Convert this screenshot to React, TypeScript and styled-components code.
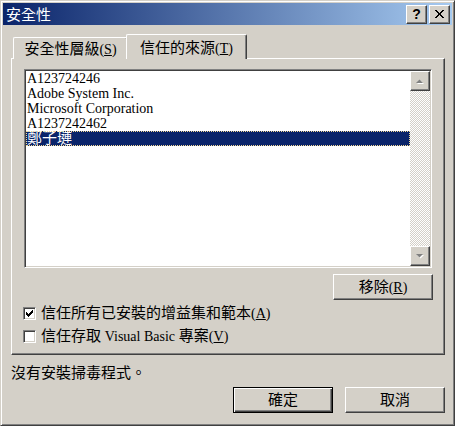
import React from "react";
import styled, { createGlobalStyle } from "styled-components";

const FACE = "#d4d0c8";
const SHADOW = "#808080";
const DARK = "#404040";
const LIGHT = "#ffffff";
const NAVY = "#0a246a";
const UI_FONT = `"Liberation Serif", "Noto Sans CJK TC", serif`;

const GlobalStyle = createGlobalStyle`
  html, body { margin: 0; padding: 0; background: ${FACE}; }
  body { width: 455px; height: 426px; overflow: hidden; }
  * { box-sizing: border-box; }
`;

const Window = styled.div`
  width: 455px;
  height: 426px;
  background: ${FACE};
  border: 1px solid;
  border-color: ${FACE} ${DARK} ${DARK} ${FACE};
  box-shadow: inset 1px 1px ${LIGHT}, inset -1px -1px ${SHADOW};
  padding: 2px;
  display: flex;
  flex-direction: column;
  font-family: ${UI_FONT};
  font-size: 15px;
  color: #000;
`;

const TitleBar = styled.div`
  height: 22px;
  flex: none;
  display: flex;
  align-items: center;
  gap: 2px;
  padding: 0 2px 0 2px;
  background: linear-gradient(to right, ${NAVY}, #a6caf0);
`;

const TitleText = styled.div`
  flex: 1;
  color: #fff;
  font-family: "Noto Sans CJK TC", sans-serif;
  font-size: 15px;
  line-height: 22px;
  padding-left: 1px;
`;

const raised = `
  background: ${FACE};
  border: 1px solid;
  border-color: ${LIGHT} ${DARK} ${DARK} ${LIGHT};
  box-shadow: inset -1px -1px ${SHADOW}, inset 1px 1px ${FACE};
`;

const CaptionButton = styled.div`
  ${raised}
  width: 21px;
  height: 19px;
  display: flex;
  align-items: center;
  justify-content: center;
  font-family: "Liberation Sans", sans-serif;
  font-weight: bold;
  font-size: 14px;
  line-height: 1;
`;

const Client = styled.div`
  flex: 1;
  display: flex;
  flex-direction: column;
  padding: 10px 7px 0 8px;
`;

const TabStrip = styled.div`
  display: flex;
  align-items: flex-end;
  height: 24px;
  padding-left: 2px;
  margin-bottom: -1px;
  position: relative;
  z-index: 1;
`;

const Tab = styled.div<{ $active?: boolean }>`
  background: ${FACE};
  border-top: 1px solid ${LIGHT};
  border-left: 1px solid ${LIGHT};
  border-right: 1px solid ${DARK};
  box-shadow: inset -1px 0 ${SHADOW};
  border-radius: 2px 2px 0 0;
  text-align: center;
  line-height: 17px;
  white-space: nowrap;
  width: ${(p) => (p.$active ? 121 : 115)}px;
  height: ${(p) => (p.$active ? 25 : 22)}px;
  padding-top: ${(p) => (p.$active ? 5 : 3)}px;
  margin-left: ${(p) => (p.$active ? -2 : 0)}px;
  position: ${(p) => (p.$active ? "relative" : "static")};
  z-index: ${(p) => (p.$active ? 2 : "auto")};
`;

const Latin = styled.span`
  font-family: "Liberation Serif", serif;
  font-size: 14px;
`;

const Panel = styled.div`
  height: 297px;
  border: 1px solid;
  border-color: ${LIGHT} ${DARK} ${DARK} ${LIGHT};
  box-shadow: inset -1px -1px ${SHADOW};
  padding: 10px 11px 0 12px;
  display: flex;
  flex-direction: column;
`;

const ListBox = styled.div`
  width: 408px;
  height: 199px;
  background: #fff;
  border: 1px solid;
  border-color: ${SHADOW} ${LIGHT} ${LIGHT} ${SHADOW};
  box-shadow: inset 1px 1px ${DARK}, inset -1px -1px ${FACE};
  padding: 1px;
  display: flex;
`;

const Rows = styled.div`
  flex: 1;
  display: flex;
  flex-direction: column;
`;

const Row = styled.div<{ $selected?: boolean; $cjk?: boolean }>`
  height: 15px;
  line-height: 15px;
  padding-left: 1px;
  white-space: nowrap;
  font-family: ${UI_FONT};
  font-size: ${(p) => (p.$cjk ? 15 : 14)}px;
  background: ${(p) => (p.$selected ? NAVY : "transparent")};
  color: ${(p) => (p.$selected ? "#fff" : "#000")};
  outline: ${(p) => (p.$selected ? `1px dotted #f5db95` : "none")};
  outline-offset: -1px;
`;

const ScrollBar = styled.div`
  width: 20px;
  display: flex;
  flex-direction: column;
`;

const ScrollButton = styled.div`
  ${raised}
  width: 20px;
  height: 20px;
  display: flex;
  align-items: center;
  justify-content: center;
`;

const ScrollTrack = styled.div`
  flex: 1;
  background-color: ${FACE};
  background-image: conic-gradient(${LIGHT} 25%, ${FACE} 0 50%, ${LIGHT} 0 75%, ${FACE} 0);
  background-size: 2px 2px;
`;

const ButtonRowRight = styled.div<{ $top: number }>`
  display: flex;
  justify-content: flex-end;
  gap: 12px;
  margin-top: ${(p) => p.$top}px;
`;

const PushButton = styled.div<{ $default?: boolean }>`
  width: 100px;
  height: 26px;
  background: ${FACE};
  display: flex;
  align-items: center;
  justify-content: center;
  line-height: 17px;
  white-space: nowrap;
  border: 1px solid;
  border-color: ${(p) => (p.$default ? "#000" : `${LIGHT} ${DARK} ${DARK} ${LIGHT}`)};
  box-shadow: ${(p) =>
    p.$default
      ? `inset 1px 1px ${LIGHT}, inset -1px -1px ${DARK}, inset -2px -2px ${SHADOW}`
      : `inset -1px -1px ${SHADOW}, inset 1px 1px ${FACE}`};
`;

const CheckRow = styled.div<{ $top: number }>`
  display: flex;
  align-items: center;
  gap: 5px;
  height: 17px;
  line-height: 17px;
  margin-left: -1px;
  margin-top: ${(p) => p.$top}px;
  white-space: nowrap;
`;

const CheckBox = styled.div`
  width: 13px;
  height: 13px;
  flex: none;
  background: #fff;
  border: 1px solid;
  border-color: ${SHADOW} ${LIGHT} ${LIGHT} ${SHADOW};
  box-shadow: inset 1px 1px ${DARK}, inset -1px -1px ${FACE};
  display: flex;
  align-items: center;
  justify-content: center;
`;

const Status = styled.div`
  margin-top: 10px;
  height: 17px;
  line-height: 17px;
`;

const Mn = ({ k }: { k: string }) => (
  <Latin>
    (<u>{k}</u>)
  </Latin>
);

const Arrow = ({ up }: { up?: boolean }) => (
  <svg width="8" height="5" viewBox="0 0 8 5" style={{ overflow: "visible" }}>
    {up ? (
      <>
        <path d="M0 4 L7 4 L3.5 0.5 Z" fill="#fff" transform="translate(1,1)" />
        <path d="M0 4 L7 4 L3.5 0.5 Z" fill={SHADOW} />
      </>
    ) : (
      <>
        <path d="M0 0 L7 0 L3.5 3.5 Z" fill="#fff" transform="translate(1,1)" />
        <path d="M0 0 L7 0 L3.5 3.5 Z" fill={SHADOW} />
      </>
    )}
  </svg>
);

const CheckMark = () => (
  <svg width="7" height="7" viewBox="0 0 7 7" shapeRendering="crispEdges">
    <path
      d="M6 0h1v1h-1z M5 1h2v1h-2z M0 2h1v1h-1z M4 2h3v1h-3z M0 3h2v1h-2z M3 3h3v1h-3z M0 4h5v1h-5z M1 5h3v1h-3z M2 6h1v1h-1z"
      fill="#000"
    />
  </svg>
);

const CloseGlyph = () => (
  <svg width="9" height="8" viewBox="0 0 9 8" shapeRendering="crispEdges">
    <path
      d="M0 0h2v1h-2z M7 0h2v1h-2z M1 1h2v1h-2z M6 1h2v1h-2z M2 2h2v1h-2z M5 2h2v1h-2z M3 3h3v1h-3z M3 4h3v1h-3z M2 5h2v1h-2z M5 5h2v1h-2z M1 6h2v1h-2z M6 6h2v1h-2z M0 7h2v1h-2z M7 7h2v1h-2z"
      fill="#000"
    />
  </svg>
);

export default function App() {
  return (
    <>
      <GlobalStyle />
      <Window>
        <TitleBar>
          <TitleText>安全性</TitleText>
          <CaptionButton>?</CaptionButton>
          <CaptionButton>
            <CloseGlyph />
          </CaptionButton>
        </TitleBar>
        <Client>
          <TabStrip>
            <Tab>
              安全性層級<Mn k="S" />
            </Tab>
            <Tab $active>
              信任的來源<Mn k="T" />
            </Tab>
          </TabStrip>
          <Panel>
            <ListBox>
              <Rows>
                <Row>A123724246</Row>
                <Row>Adobe System Inc.</Row>
                <Row>Microsoft Corporation</Row>
                <Row>A1237242462</Row>
                <Row $selected $cjk>
                  鄭子璉
                </Row>
              </Rows>
              <ScrollBar>
                <ScrollButton>
                  <Arrow up />
                </ScrollButton>
                <ScrollTrack />
                <ScrollButton>
                  <Arrow />
                </ScrollButton>
              </ScrollBar>
            </ListBox>
            <ButtonRowRight $top={6}>
              <PushButton>
                移除<Mn k="R" />
              </PushButton>
            </ButtonRowRight>
            <CheckRow $top={5}>
              <CheckBox>
                <CheckMark />
              </CheckBox>
              <span>
                信任所有已安裝的增益集和範本<Mn k="A" />
              </span>
            </CheckRow>
            <CheckRow $top={6}>
              <CheckBox />
              <span>
                信任存取 <Latin>Visual Basic</Latin> 專案<Mn k="V" />
              </span>
            </CheckRow>
          </Panel>
          <Status>沒有安裝掃毒程式。</Status>
          <ButtonRowRight $top={5}>
            <PushButton $default>確定</PushButton>
            <PushButton>取消</PushButton>
          </ButtonRowRight>
        </Client>
      </Window>
    </>
  );
}
